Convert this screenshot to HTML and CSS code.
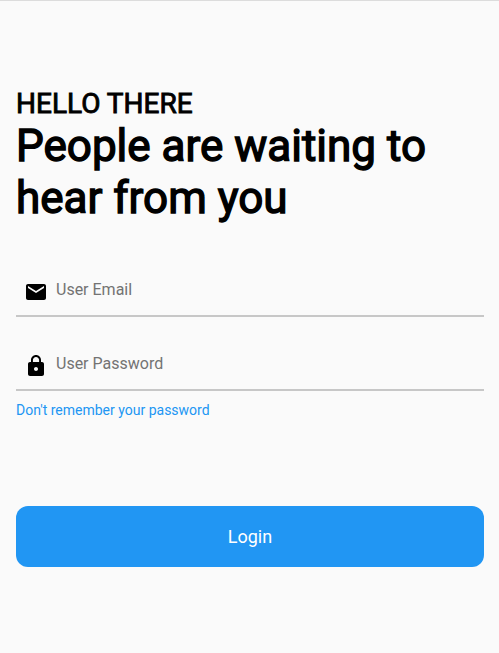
FILE: index.html
```html
<!DOCTYPE html>
<html lang="en">
<head>
<meta charset="utf-8">
<title>Login</title>
<link rel="stylesheet" href="styles.css">
</head>
<body>
<main class="page">
  <header class="intro">
    <p class="greeting">HELLO THERE</p>
    <h1 class="headline">People are waiting to<br>hear from you</h1>
  </header>
  <form class="form">
    <label class="field">
      <svg class="icon" viewBox="0 0 24 24"><path d="M20 4H4c-1.1 0-1.99.9-1.99 2L2 18c0 1.1.9 2 2 2h16c1.1 0 2-.9 2-2V6c0-1.1-.9-2-2-2zm0 4l-8 5-8-5V6l8 5 8-5v2z"/></svg>
      <span class="placeholder">User Email</span>
    </label>
    <label class="field">
      <svg class="icon" viewBox="0 0 24 24"><path d="M18 8h-1V6c0-2.76-2.24-5-5-5S7 3.24 7 6v2H6c-1.1 0-2 .9-2 2v10c0 1.1.9 2 2 2h12c1.1 0 2-.9 2-2V10c0-1.1-.9-2-2-2zm-6 9c-1.1 0-2-.9-2-2s.9-2 2-2 2 .9 2 2-.9 2-2 2zm3.1-9H8.9V6c0-1.71 1.39-3.1 3.1-3.1 1.71 0 3.1 1.39 3.1 3.1v2z"/></svg>
      <span class="placeholder">User Password</span>
    </label>
    <a class="forgot">Don't remember your password</a>
    <button class="login" type="button">Login</button>
  </form>
</main>
</body>
</html>
```
FILE: styles.css
```css
* { box-sizing: border-box; }
body {
  margin: 0;
  background: #fafafa;
  font-family: Roboto, sans-serif;
  color: #000;
}
.page {
  height: 653px;
  padding: 86px 15px 0 16px;
  border-top: 1px solid #dcdcdc;
}
.greeting {
  margin: 0;
  font-size: 28px;
  line-height: 33px;
  font-weight: 400;
  -webkit-text-stroke: 0.9px #000;
}
.headline {
  margin: 0;
  font-size: 44px;
  line-height: 52px;
  font-weight: 400;
  -webkit-text-stroke: 1.4px #000;
  white-space: nowrap;
}
.form {
  display: flex;
  flex-direction: column;
  margin-top: 40px;
}
.field {
  display: flex;
  align-items: center;
  height: 53px;
  margin-bottom: 21px;
  padding: 5px 8px 0;
  border-bottom: 2px solid #c7c7c7;
}
.icon {
  width: 24px;
  height: 24px;
  margin-right: 8px;
}
.placeholder {
  font-size: 16px;
  line-height: 20px;
  color: #737373;
  margin-top: -4px;
}
.forgot {
  margin-top: -11px;
  font-size: 14px;
  line-height: 18px;
  color: #2196f3;
}
.login {
  height: 61px;
  margin-top: 87px;
  border: 0;
  border-radius: 12px;
  background: #2196f3;
  color: #fff;
  font: 400 18px/22px Roboto, sans-serif;
}
```
